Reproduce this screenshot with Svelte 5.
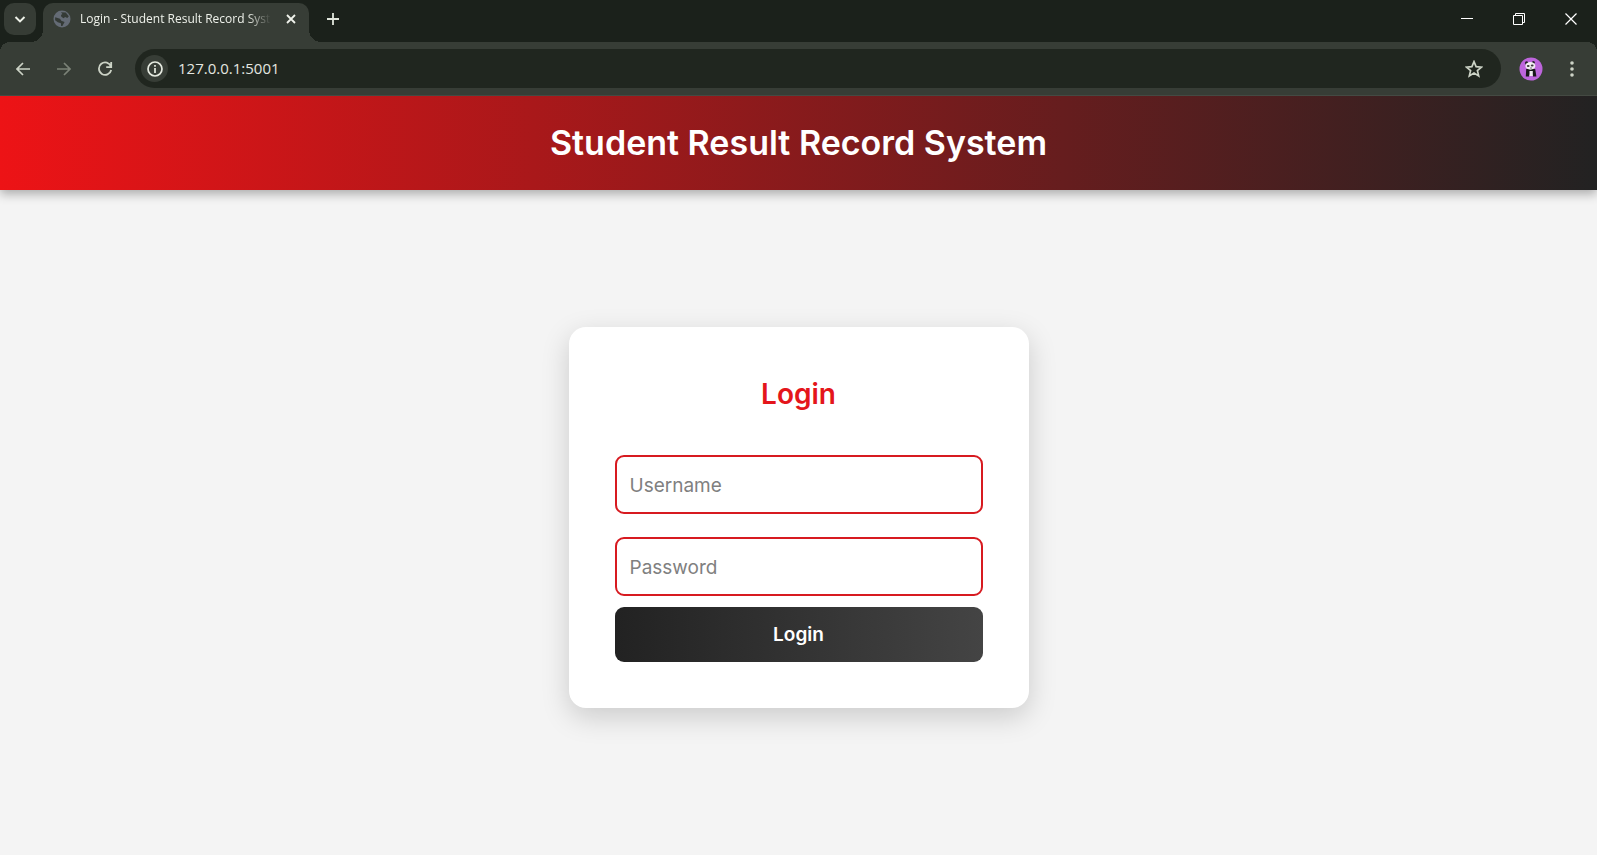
<script>
  let address = $state('127.0.0.1:5001');
  let username = $state('');
  let password = $state('');
</script>

<div class="window">
  <div class="tabstrip">
    <button class="search-tabs" aria-label="Search tabs">
      <svg width="12" height="12" viewBox="0 0 12 12"><path d="M1.5 4L6 8.4 10.500 4" fill="none" stroke="#eef2e9" stroke-width="2" /></svg>
    </button>
    <div class="tab">
      <svg class="globe" width="18" height="18" viewBox="0 0 18 18">
        <circle cx="9" cy="9" r="8.5" fill="#646b75" />
        <path d="M2.2 7.2L7 8.8 8.3 10.7 11.600 12.1 9.4 15.9 8.1 15.9 7.9 13.2 4.8 12.2 2.1 10.2zM8 2.2L12.7 2.4 15.8 6.3 14.3 8.1 12.2 6.9 10.4 8.2 8.2 6.5 8 4.9 9.4 4.1z" fill="#343a36" />
      </svg>
      <span class="tab-title">Login - Student Result Record System</span>
      <button class="close-tab" aria-label="Close tab">
        <svg width="10" height="10" viewBox="0 0 10 10"><path d="M1 1l8 8M9 1L1 9" stroke="#f0f3ec" stroke-width="1.8" /></svg>
      </button>
    </div>
    <button class="new-tab" aria-label="New tab">
      <svg width="12" height="12" viewBox="0 0 12 12"><path d="M6 0v12M0 6h12" stroke="#e1e6dc" stroke-width="1.8" /></svg>
    </button>
    <div class="window-controls">
      <button aria-label="Minimize"><svg width="12" height="12" viewBox="0 0 12 12"><path d="M0 5.5h12" stroke="#fff" /></svg></button>
      <button aria-label="Restore"><svg width="12" height="12" viewBox="0 0 12 12"><path d="M.5 2.5h9v9h-9zM2.5 2.5v-2h9v9h-2" fill="none" stroke="#fff" /></svg></button>
      <button aria-label="Close"><svg width="12" height="12" viewBox="0 0 12 12"><path d="M.5.5l11 11M11.5.5l-11 11" stroke="#fff" stroke-width="1.2" /></svg></button>
    </div>
  </div>

  <div class="toolbar">
    <button class="nav" aria-label="Back">
      <svg width="14" height="14" viewBox="0 0 14 14"><path d="M14 7H1.2M7 1L1 7l6 6" fill="none" stroke="#ccd3c6" stroke-width="1.7" /></svg>
    </button>
    <button class="nav" aria-label="Forward" disabled>
      <svg width="14" height="14" viewBox="0 0 14 14"><path d="M0 7h12.8M7 1l6 6-6 6" fill="none" stroke="#7b8277" stroke-width="1.7" /></svg>
    </button>
    <button class="nav" aria-label="Reload">
      <svg width="16" height="16" viewBox="0 0 16 16"><path d="M14 5.6A6.2 6.2 0 1 0 14.2 9M14.2 1v5.2H9.2" fill="none" stroke="#ccd3c6" stroke-width="1.8" /></svg>
    </button>
    <div class="omnibox">
      <button class="site-info" aria-label="View site information">
        <svg width="16" height="16" viewBox="0 0 16 16"><circle cx="8" cy="8" r="7" fill="none" stroke="#e5eae0" stroke-width="1.7" /><path d="M8 7v5M8 4v1.8" stroke="#e5eae0" stroke-width="1.7" /></svg>
      </button>
      <input class="address" type="text" aria-label="Address" bind:value={address} />
      <button class="bookmark" aria-label="Bookmark this page">
        <svg width="18" height="18" viewBox="0 0 18 18"><path d="M9 1.600l2.1 5 5.4.5-4.1 3.5 1.3 5.3L9 13.1l-4.7 2.8 1.3-5.3-4.1-3.5 5.4-.5z" fill="none" stroke="#ccd3c6" stroke-width="1.7" /></svg>
      </button>
    </div>
    <button class="profile" aria-label="Profile">
      <svg width="24" height="24" viewBox="0 0 24 24">
        <circle cx="12" cy="12" r="11.5" fill="#bd65dc" />
        <circle cx="7.6" cy="6" r="1.7" fill="#252128" /><circle cx="14.4" cy="5.5" r="1.5" fill="#252128" />
        <path d="M7.2 12h9l1.2 7.5H14l-.5-2h-3l-.5 2H6.8z" fill="#18171a" />
        <ellipse cx="11.4" cy="8.9" rx="5" ry="3.8" fill="#f1eef1" />
        <ellipse cx="9.2" cy="9" rx="1.4" ry="1" fill="#3c373d" /><ellipse cx="13.2" cy="8.4" rx="1.4" ry="1" fill="#3c373d" />
        <path d="M10.5 14h3.3v5h-3.3z" fill="#eeeaf0" /><path d="M11 11h2" stroke="#777" />
      </svg>
    </button>
    <button class="menu" aria-label="Menu">
      <svg width="4" height="16" viewBox="0 0 4 16"><g fill="#ccd3c6"><circle cx="2" cy="2" r="1.8" /><circle cx="2" cy="8" r="1.8" /><circle cx="2" cy="14" r="1.8" /></g></svg>
    </button>
  </div>

  <header><h1>Student Result Record System</h1></header>

  <main>
    <form class="card" onsubmit={(event) => event.preventDefault()}>
      <h2>Login</h2>
      <input class="field" type="text" placeholder="Username" aria-label="Username" bind:value={username} />
      <input class="field" type="password" placeholder="Password" aria-label="Password" bind:value={password} />
      <button class="submit" type="submit">Login</button>
    </form>
  </main>
</div>

<style>
  :global(body) { margin: 0; background: #f4f4f4; }
  * { box-sizing: border-box; }
  button { border: 0; padding: 0; background: none; cursor: pointer; }
  svg { display: block; flex: none; }
  .window {
    min-height: 100vh;
    display: flex;
    flex-direction: column;
    font-family: Inter, sans-serif;
  }
  .tabstrip {
    display: flex;
    align-items: flex-start;
    height: 42px;
    padding: 3px 0 0 4px;
    background: #1b211b;
  }
  .search-tabs {
    width: 32px;
    height: 32px;
    margin-right: 7px;
    border-radius: 10px;
    background: #363c35;
    display: grid;
    place-items: center;
  }
  .tab {
    position: relative;
    flex: 0 1 266px;
    min-width: 0;
    height: 39px;
    padding: 0 13px 7px 10px;
    display: flex;
    align-items: center;
    border-radius: 10px 10px 0 0;
    background: #373d36;
  }
  .tab::before, .tab::after {
    content: "";
    position: absolute;
    bottom: 0;
    width: 12px;
    height: 12px;
  }
  .tab::before { right: 100%; background: radial-gradient(circle at 0 0, transparent 12px, #373d36 12px); }
  .tab::after { left: 100%; background: radial-gradient(circle at 100% 0, transparent 12px, #373d36 12px); }
  .tab-title {
    flex: 1;
    min-width: 0;
    margin: 0 15px 0 9px;
    overflow: hidden;
    white-space: nowrap;
    font: 12px/18px "Open Sans", sans-serif;
    color: #eef1ea;
    mask-image: linear-gradient(to right, #000 calc(100% - 24px), transparent);
  }
  .new-tab { margin: 10px 0 0 18px; }
  .window-controls { display: flex; margin-left: auto; }
  .window-controls button {
    width: 52px;
    height: 32px;
    display: grid;
    place-items: center;
  }
  .toolbar {
    position: relative;
    display: flex;
    align-items: center;
    height: 54px;
    padding: 0 20px 0 2px;
    background: #373d36;
    border-bottom: 1px solid #444a43;
  }
  .toolbar::before, .toolbar::after {
    content: "";
    position: absolute;
    top: 0;
    width: 10px;
    height: 10px;
  }
  .toolbar::before { left: 0; background: radial-gradient(circle at 100% 100%, transparent 10px, #1b211b 10px); }
  .toolbar::after { right: 0; background: radial-gradient(circle at 0 100%, transparent 10px, #1b211b 10px); }
  .nav {
    width: 41px;
    height: 32px;
    display: grid;
    place-items: center;
  }
  .omnibox {
    flex: 1;
    display: flex;
    align-items: center;
    height: 39px;
    margin-left: 10px;
    padding: 0 18px 0 6px;
    border-radius: 20px;
    background: #20261f;
  }
  .site-info {
    width: 27px;
    height: 27px;
    border-radius: 50%;
    background: #373d36;
    display: grid;
    place-items: center;
  }
  .address {
    flex: 1;
    min-width: 0;
    border: 0;
    padding: 0 10px 2px;
    outline: 0;
    background: none;
    font: 15px/20px "Open Sans", sans-serif;
    color: #e4e7e0;
  }
  .profile { margin: 0 24px 0 18px; }
  .menu { width: 10px; display: grid; place-items: center; }
  header {
    position: relative;
    padding: 22px 20px;
    background: linear-gradient(90deg, #ed1316, #222);
    box-shadow: 0 4px 10px rgba(0, 0, 0, 0.3);
    clip-path: inset(0 0 -20px 0);
  }
  h1 {
    margin: 0;
    font-size: 34px;
    line-height: 50px;
    font-weight: 600;
    text-align: center;
    color: #fff;
  }
  main {
    flex: 1;
    display: grid;
    place-items: center;
    padding: 20px 20px 30px;
  }
  .card {
    width: 100%;
    max-width: 460px;
    padding: 46px;
    display: flex;
    flex-direction: column;
    border-radius: 17px;
    background: #fff;
    box-shadow: 0 9px 28px rgba(0, 0, 0, 0.17);
  }
  h2 {
    margin: 0 0 40px;
    font-size: 28px;
    line-height: 42px;
    font-weight: 600;
    text-align: center;
    color: #e4151b;
  }
  .field {
    width: 100%;
    height: 59px;
    margin-bottom: 23px;
    padding: 2px 13px 0;
    border: 2px solid #d71a20;
    border-radius: 9px;
    outline: 0;
    background: #fff;
    font: 19px/28px Inter, sans-serif;
    color: #222;
  }
  .field::placeholder { color: #808080; opacity: 1; }
  .field[type="password"] { margin-bottom: 11px; }
  .submit {
    height: 55px;
    border-radius: 9px;
    background: linear-gradient(90deg, #222, #444);
    font: 600 19px/28px Inter, sans-serif;
    color: #fff;
  }
</style>
